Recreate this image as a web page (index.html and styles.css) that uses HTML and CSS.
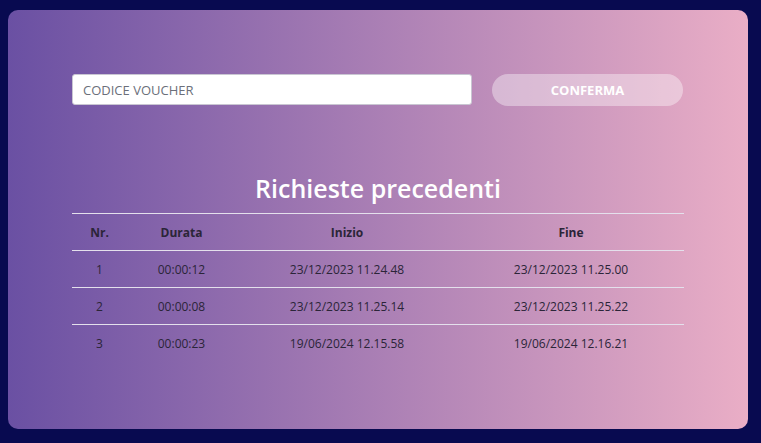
FILE: index.html
```html
<!DOCTYPE html>
<html>
<head>
  <link rel="stylesheet" href="styles.css">
</head>
<body>
  <div class="card">
    <form class="voucher-form">
      <input type="text" class="voucher-input" placeholder="CODICE VOUCHER">
      <button type="button" class="confirm-btn">CONFERMA</button>
    </form>

    <h2 class="section-title">Richieste precedenti</h2>

    <table class="history">
      <thead>
        <tr>
          <th class="col-nr">Nr.</th>
          <th class="col-durata">Durata</th>
          <th class="col-inizio">Inizio</th>
          <th>Fine</th>
        </tr>
      </thead>
      <tbody>
        <tr>
          <td>1</td>
          <td>00:00:12</td>
          <td>23/12/2023 11.24.48</td>
          <td>23/12/2023 11.25.00</td>
        </tr>
        <tr>
          <td>2</td>
          <td>00:00:08</td>
          <td>23/12/2023 11.25.14</td>
          <td>23/12/2023 11.25.22</td>
        </tr>
        <tr>
          <td>3</td>
          <td>00:00:23</td>
          <td>19/06/2024 12.15.58</td>
          <td>19/06/2024 12.16.21</td>
        </tr>
      </tbody>
    </table>
  </div>
</body>
</html>
```

FILE: styles.css
```css
:root {
  --page-bg: #080a50;
  --text-dark: #2b2538;
  --line-color: #e4e0ec;
}

body {
  margin: 0;
  padding: 10px 13px 14px 8px;
  background: var(--page-bg);
  font-family: 'Open Sans', 'Noto Sans', sans-serif;
}

.card {
  height: 419px;
  box-sizing: border-box;
  padding: 64px 64px 0;
  border-radius: 10px;
  background: linear-gradient(to right, #6a50a3, #eaaec6);
}

.voucher-form {
  display: flex;
  gap: 20px;
  margin: 0;
}

.voucher-input {
  flex: 1;
  height: 31px;
  box-sizing: border-box;
  padding: 0 10px;
  border: 1px solid #c9c6d2;
  border-radius: 3px;
  background: white;
  font-family: inherit;
  font-size: 13px;
  color: #333;
  outline: none;
}

.voucher-input::placeholder {
  color: #6b6f7a;
}

.confirm-btn {
  width: 191px;
  height: 32px;
  margin-right: 1px;
  border: none;
  border-radius: 16px;
  background: rgba(255, 255, 255, 0.38);
  color: white;
  font-family: inherit;
  font-size: 13px;
  font-weight: 700;
  cursor: pointer;
}

.section-title {
  margin: 64px 0 7px;
  text-align: center;
  font-size: 25px;
  font-weight: 600;
  line-height: 36px;
  color: white;
}

/* history table */
.history {
  width: 100%;
  table-layout: fixed;
  border-collapse: collapse;
  font-size: 12px;
  color: var(--text-dark);
}

.history tr {
  border-top: 1px solid var(--line-color);
}

.history th,
.history td {
  height: 36px;
  padding: 0;
  text-align: center;
}

.history th {
  font-weight: 700;
}

.col-nr { width: 55px; }
.col-durata { width: 109px; }
.col-inizio { width: 222px; }
```
